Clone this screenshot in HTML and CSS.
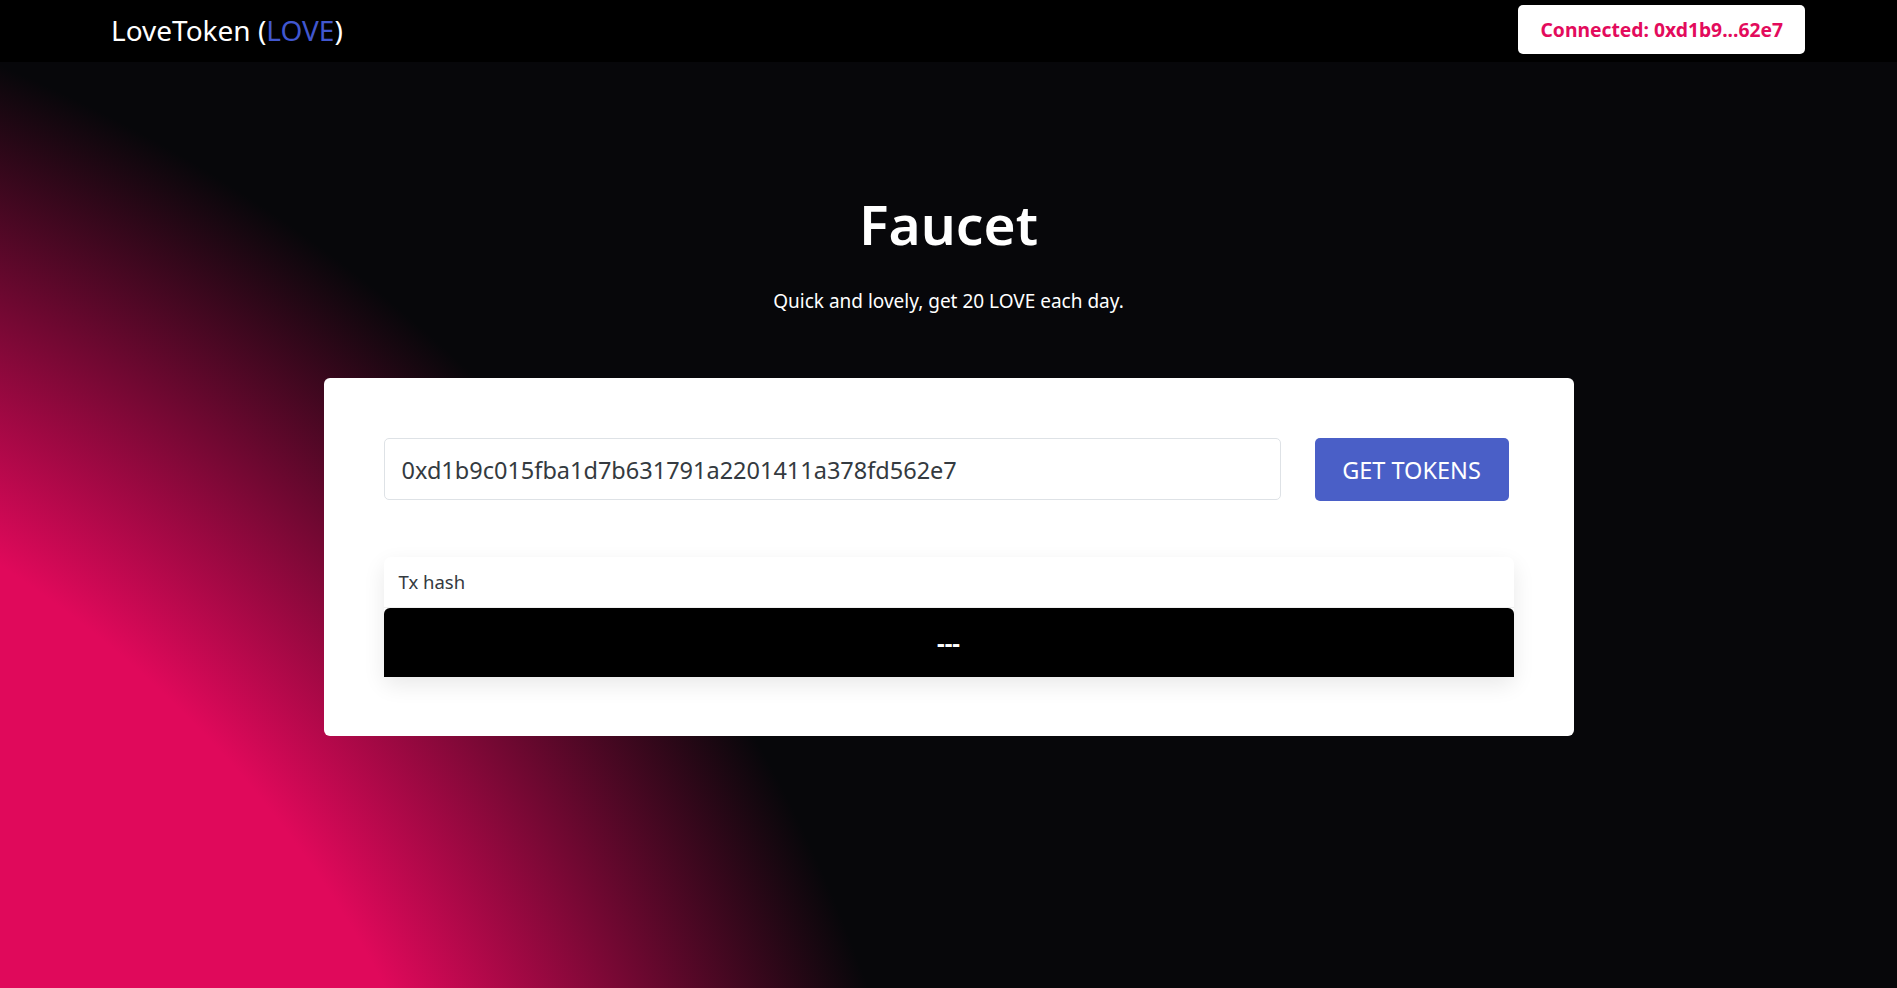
FILE: index.html
```html
<!DOCTYPE html>
<html lang="en">
<head>
<meta charset="utf-8">
<title>LoveToken Faucet</title>
<link rel="stylesheet" href="styles.css">
</head>
<body>
  <nav class="navbar">
    <div class="brand">LoveToken (<span class="brand-symbol">LOVE</span>)</div>
    <button class="connect-btn">Connected: 0xd1b9...62e7</button>
  </nav>
  <main class="hero">
    <h1 class="title">Faucet</h1>
    <p class="subtitle">Quick and lovely, get 20 LOVE each day.</p>
    <section class="card">
      <div class="form-row">
        <input class="address-input" type="text" value="0xd1b9c015fba1d7b631791a2201411a378fd562e7">
        <button class="get-btn">GET TOKENS</button>
      </div>
      <div class="tx-box">
        <div class="tx-header">Tx hash</div>
        <div class="tx-body">---</div>
      </div>
    </section>
  </main>
</body>
</html>
```

FILE: styles.css
```css
* {
  box-sizing: border-box;
}

html, body {
  margin: 0;
  padding: 0;
}

body {
  min-height: 988px;
  font-family: "Noto Sans", "Open Sans", sans-serif;
  color: #fff;
  background-color: #07070a;
  background-image: radial-gradient(circle at -600px 1500px, #e0095b 1110px, #07070a 1555px);
  background-repeat: no-repeat;
}

.navbar {
  height: 62px;
  background: #000;
  display: flex;
  justify-content: space-between;
  align-items: flex-start;
  padding: 0 92px 0 111px;
}

.brand {
  font-size: 28px;
  line-height: 45px;
  margin-top: 8px;
  color: #fff;
}

.brand-symbol {
  color: #4157cf;
}

.connect-btn {
  margin-top: 5px;
  height: 49px;
  padding: 0 22px;
  border: none;
  border-radius: 5px;
  background: #fff;
  color: #e30b5c;
  font-family: inherit;
  font-size: 19.3px;
  font-weight: 700;
}

.hero {
  padding-top: 126px;
  display: flex;
  flex-direction: column;
  align-items: center;
}

.title {
  margin: 0;
  font-size: 55px;
  line-height: 72px;
  font-weight: 600;
}

.subtitle {
  margin: 26px 0 0;
  font-size: 19px;
  line-height: 30px;
}

.card {
  margin-top: 62px;
  width: 1250px;
  background: #fff;
  border-radius: 6px;
  padding: 60px 60px 59px;
}

.form-row {
  display: grid;
  grid-template-columns: 1fr 194px;
  column-gap: 34px;
  padding-right: 5px;
  align-items: start;
}

.address-input {
  height: 62px;
  width: 100%;
  padding: 13px 17px 11px;
  border: 1px solid #dee2e6;
  border-radius: 5px;
  font-family: inherit;
  font-size: 23.5px;
  line-height: 36px;
  color: #343a40;
  background: #fff;
}

.get-btn {
  height: 63px;
  border: none;
  border-radius: 5px;
  background: #4a5fc7;
  color: #fff;
  font-family: inherit;
  font-size: 23.5px;
}

.tx-box {
  margin-top: 56px;
  border-radius: 7px;
  background: #fff;
  box-shadow: 0 8px 22px rgba(0, 0, 0, 0.09);
}

.tx-header {
  padding: 10px 15px;
  font-size: 18.5px;
  line-height: 30px;
  color: #343a40;
  border-bottom: 1px solid #f0f0f0;
}

.tx-body {
  height: 69px;
  background: #000;
  border-radius: 6px 6px 0 0;
  color: #fff;
  font-size: 24px;
  font-weight: 700;
  display: flex;
  align-items: center;
  justify-content: center;
}
```
